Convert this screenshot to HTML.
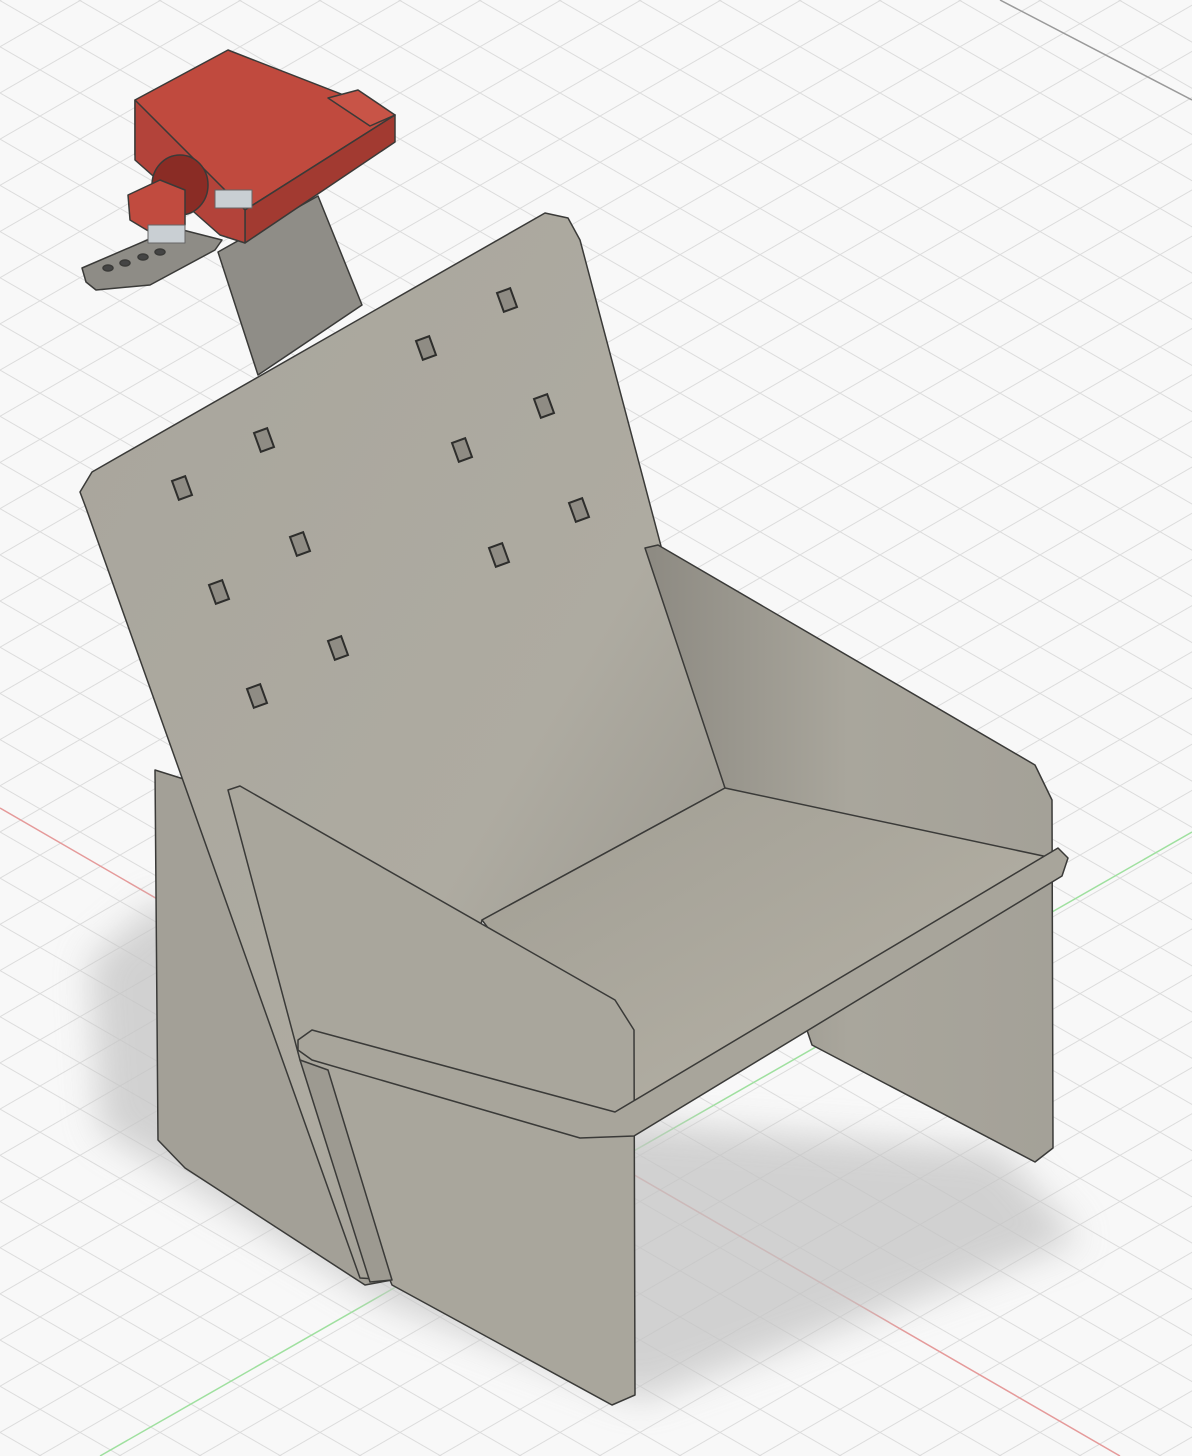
<!DOCTYPE html>
<html><head><meta charset="utf-8"><style>
html,body{margin:0;padding:0;background:#f7f7f7;}
svg{display:block;}
</style></head><body>
<svg width="1192" height="1456" viewBox="0 0 1192 1456" xmlns="http://www.w3.org/2000/svg">
<defs>
<pattern id="g1" width="2000" height="40" patternUnits="userSpaceOnUse" patternTransform="rotate(30)">
<line x1="0" y1="0.5" x2="2000" y2="0.5" stroke="#dcdcdc" stroke-width="1"/>
</pattern>
<pattern id="g2" width="2000" height="40" patternUnits="userSpaceOnUse" patternTransform="rotate(-30)">
<line x1="0" y1="0.5" x2="2000" y2="0.5" stroke="#dcdcdc" stroke-width="1"/>
</pattern>
<filter id="bl" x="-20%" y="-20%" width="140%" height="140%"><feGaussianBlur stdDeviation="18"/></filter>
<linearGradient id="bk" x1="0" y1="0" x2="1" y2="1">
<stop offset="0" stop-color="#a8a59c"/><stop offset="0.6" stop-color="#aeaba1"/><stop offset="1" stop-color="#8f8c84"/>
</linearGradient>
<linearGradient id="rs" x1="0" y1="0" x2="1" y2="0">
<stop offset="0" stop-color="#8d8a82"/><stop offset="0.5" stop-color="#a9a69c"/><stop offset="1" stop-color="#a4a198"/>
</linearGradient>
<linearGradient id="st" x1="0" y1="0" x2="1" y2="1">
<stop offset="0" stop-color="#a19e94"/><stop offset="1" stop-color="#b8b4a8"/>
</linearGradient>
</defs>
<rect width="1192" height="1456" fill="#f8f8f8"/>
<rect width="1192" height="1456" fill="url(#g1)"/>
<rect width="1192" height="1456" fill="url(#g2)"/>
<line x1="1000" y1="0" x2="1192" y2="100" stroke="#9a9a9a" stroke-width="1.5"/>
<line x1="0" y1="808" x2="1120" y2="1456" stroke="#e59a9a" stroke-width="1.5"/>
<line x1="1192" y1="832" x2="100" y2="1456" stroke="#9fe09f" stroke-width="1.5"/>
<polygon points="90,960 160,900 600,1120 1000,1150 1080,1240 640,1400 380,1300 100,1130" fill="#c4c4c4" filter="url(#bl)" opacity="0.75"/>

<g stroke="#3a3a38" stroke-width="1.5" stroke-linejoin="round">
<polygon points="218,252 318,196 362,305 258,375" fill="#8f8d87"/>
<polygon points="82,268 175,228 222,240 215,250 150,285 96,290 86,282" fill="#8e8c86"/>
<ellipse cx="108" cy="268" rx="5" ry="3" fill="#444"/><ellipse cx="125" cy="263" rx="5" ry="3" fill="#444"/><ellipse cx="143" cy="257" rx="5" ry="3" fill="#444"/><ellipse cx="160" cy="252" rx="5" ry="3" fill="#444"/>
<polygon points="135,100 228,50 395,115 245,210 135,155" fill="#c04a3e"/>
<polygon points="245,210 395,115 395,142 245,243" fill="#a23a31"/>
<polygon points="135,100 135,160 220,235 245,243 245,210" fill="#b3433a"/>
<polygon points="328,98 358,90 395,115 370,126" fill="#c85447"/>
<ellipse cx="180" cy="185" rx="28" ry="30" fill="#8a2c25"/>
<polygon points="128,195 160,180 185,190 185,225 150,232 130,220" fill="#c14b3f"/>
<rect x="215" y="190" width="37" height="18" fill="#c9cfd3" stroke="#666" stroke-width="1"/>
<rect x="148" y="225" width="37" height="18" fill="#c9cfd3" stroke="#666" stroke-width="1"/>
<polygon points="155,770 225,792 392,1280 365,1285 185,1168 158,1140" fill="#a3a097"/>
<polygon points="80,492 92,472 545,213 568,218 580,240 725,788 482,920 392,1280 360,1278 86,508" fill="url(#bk)"/>
<polygon points="645,548 658,545 1035,765 1052,800 1053,1148 1035,1162 812,1045 725,788" fill="url(#rs)"/>
<polygon points="482,920 725,788 1062,860 632,1118" fill="url(#st)"/>
<polygon points="228,790 240,786 615,1000 634,1030 635,1395 612,1405 392,1285 300,1060" fill="#a9a69c"/>
<polygon points="298,1040 312,1030 615,1112 1058,848 1068,858 1062,876 634,1136 580,1138 312,1060 298,1050" fill="#a8a59b"/>
<polygon points="300,1060 328,1070 392,1280 370,1282" fill="#9d9a91"/>
</g>
<g fill="#8f8c84" stroke="#2e2e2c" stroke-width="2">
<rect x="175" y="478" width="14" height="20" transform="rotate(-20 182 488)"/>
<rect x="257" y="430" width="14" height="20" transform="rotate(-20 264 440)"/>
<rect x="419" y="338" width="14" height="20" transform="rotate(-20 426 348)"/>
<rect x="500" y="290" width="14" height="20" transform="rotate(-20 507 300)"/>
<rect x="537" y="396" width="14" height="20" transform="rotate(-20 544 406)"/>
<rect x="455" y="440" width="14" height="20" transform="rotate(-20 462 450)"/>
<rect x="293" y="534" width="14" height="20" transform="rotate(-20 300 544)"/>
<rect x="212" y="582" width="14" height="20" transform="rotate(-20 219 592)"/>
<rect x="572" y="500" width="14" height="20" transform="rotate(-20 579 510)"/>
<rect x="492" y="545" width="14" height="20" transform="rotate(-20 499 555)"/>
<rect x="331" y="638" width="14" height="20" transform="rotate(-20 338 648)"/>
<rect x="250" y="686" width="14" height="20" transform="rotate(-20 257 696)"/>
</g>
</svg>
</body></html>
